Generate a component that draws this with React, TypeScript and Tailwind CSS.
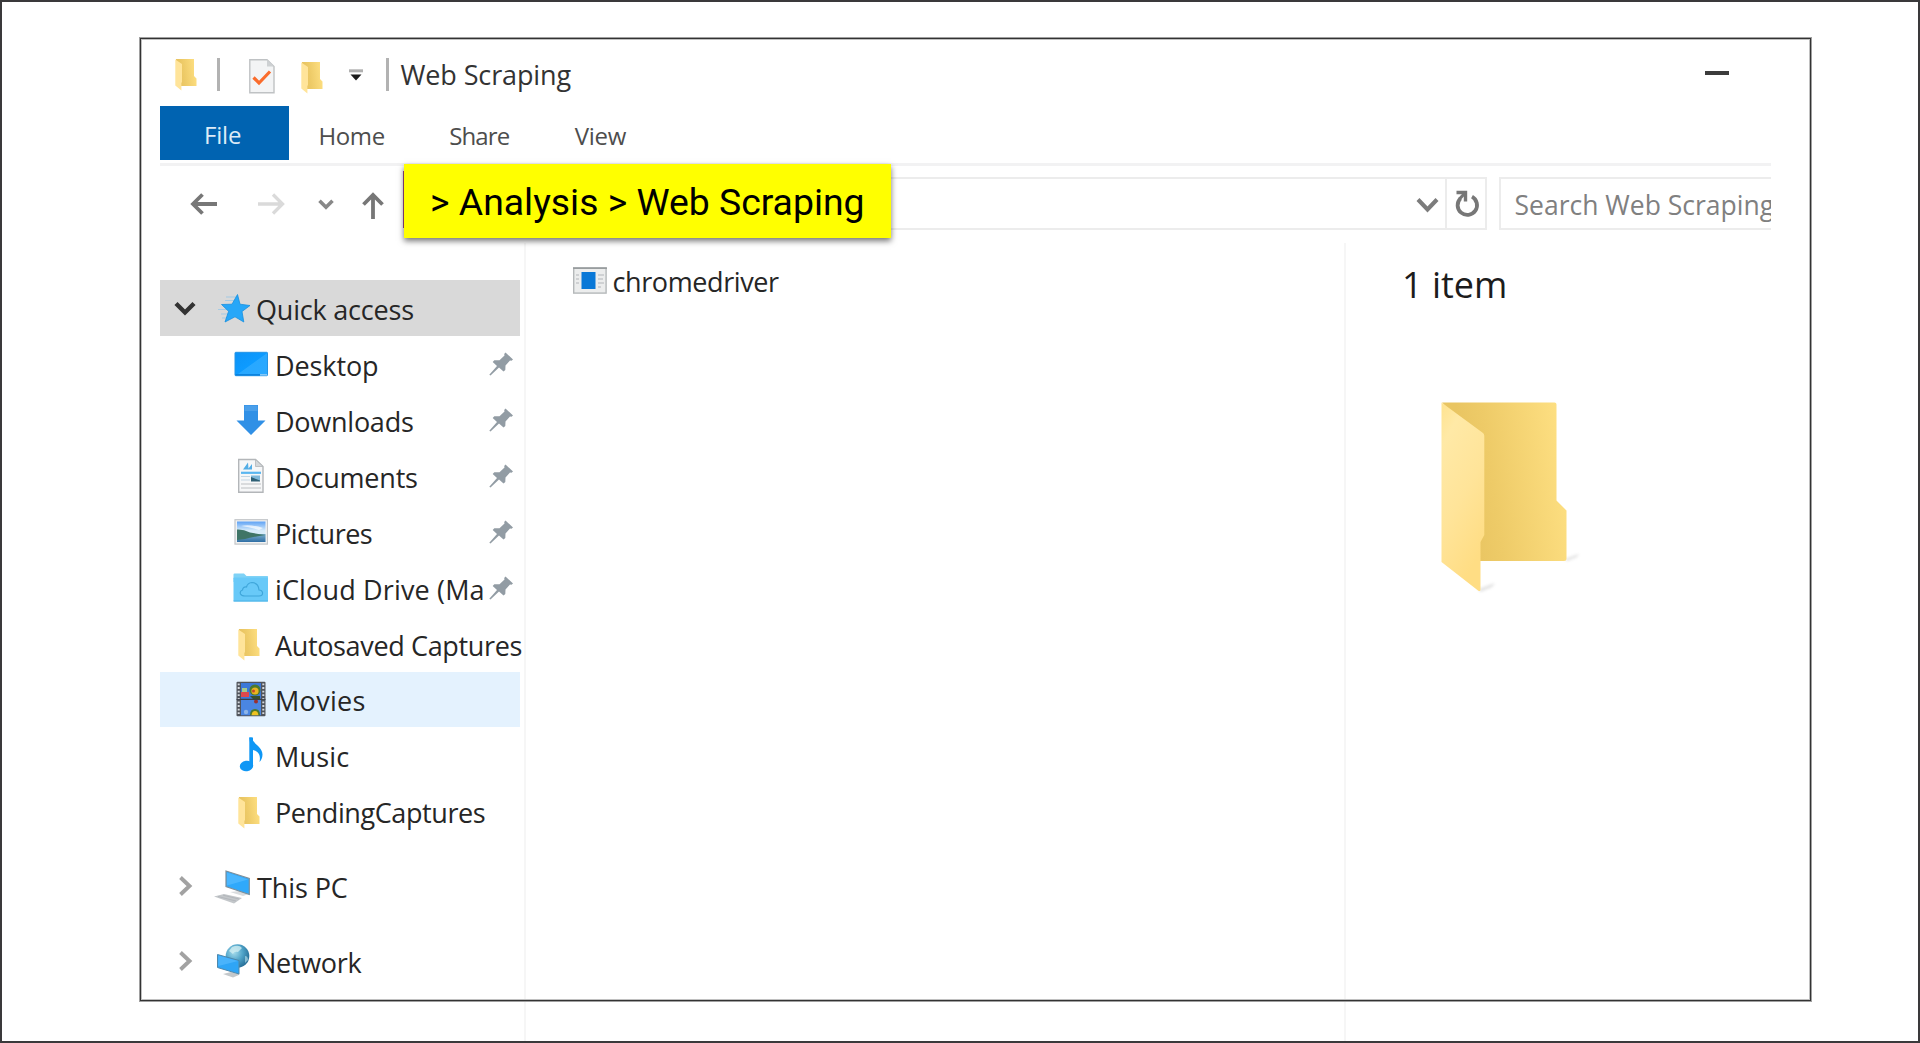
import type { ReactNode } from 'react';

function Svg({ w, h, className = '', children }: { w: number; h: number; className?: string; children: ReactNode }) {
  return (
    <svg width={w} height={h} viewBox={`0 0 ${w} ${h}`} fill="none" className={`block shrink-0 ${className}`}>
      {children}
    </svg>
  );
}

function Folder({ className = '' }: { className?: string }) {
  return (
    <Svg w={22} h={32} className={className}>
      <path d="M1 0H19V17L21.5 19.5V27H6L1 2Z" fill="url(#folderBack)" />
      <path d="M0.3 0.5L7 5V23L6.4 24V31.5L0.3 26.5Z" fill="#ffe49a" />
    </Svg>
  );
}

function BigFolder() {
  return (
    <Svg w={150} h={200}>
      <path d="M124 157L138 152L136 155L126 159Z" fill="#999" opacity="0.3" filter="url(#soft)" />
      <path d="M38 187L54 181L51 185L39 190Z" fill="#999" opacity="0.3" filter="url(#soft)" />
      <path d="M1 0.5H113.5Q115.5 0.5 115.5 2.5V98.5L125.5 108.5V156.5Q125.5 159 123 159H30V30Z" fill="url(#folderBack)" />
      <path d="M0.5 0.5L42 31Q43.3 32 43.3 34V133L39.5 140V187.5Q39.5 190 37 188.5L0.5 160Z" fill="url(#folderFront)" />
    </Svg>
  );
}

function Defs() {
  return (
    <svg width="0" height="0" className="absolute">
      <defs>
        <linearGradient id="folderBack" x1="0.15" y1="0.25" x2="1" y2="0.1">
          <stop offset="0" stopColor="#e9c562" />
          <stop offset="0.25" stopColor="#eecb68" />
          <stop offset="1" stopColor="#ffe184" />
        </linearGradient>
        <linearGradient id="folderFront" x1="0" y1="0" x2="0.4" y2="1">
          <stop offset="0" stopColor="#ffe38f" />
          <stop offset="0.2" stopColor="#ffe9a6" />
          <stop offset="0.6" stopColor="#ffe499" />
          <stop offset="1" stopColor="#ffdd84" />
        </linearGradient>
        <linearGradient id="blue" x1="0" y1="0" x2="1" y2="1">
          <stop offset="0" stopColor="#0c93f7" />
          <stop offset="0.5" stopColor="#0d9bff" />
          <stop offset="0.52" stopColor="#28a8ff" />
          <stop offset="1" stopColor="#2ba9ff" />
        </linearGradient>
        <linearGradient id="sky" x1="0" y1="0" x2="0" y2="1">
          <stop offset="0" stopColor="#5ea2f5" />
          <stop offset="0.45" stopColor="#d8ecfa" />
          <stop offset="1" stopColor="#d8ecfa" />
        </linearGradient>
        <linearGradient id="sea" x1="0" y1="0" x2="0" y2="1">
          <stop offset="0" stopColor="#7db0cc" />
          <stop offset="1" stopColor="#2f6ea5" />
        </linearGradient>
        <radialGradient id="globe" cx="0.35" cy="0.35" r="0.75">
          <stop offset="0" stopColor="#a6dcec" />
          <stop offset="0.5" stopColor="#4fa3c8" />
          <stop offset="1" stopColor="#1f658f" />
        </radialGradient>
        <filter id="soft" x="-30%" y="-60%" width="160%" height="220%">
          <feGaussianBlur stdDeviation="1.6" />
        </filter>
      </defs>
    </svg>
  );
}

function Star() {
  return (
    <Svg w={36} h={36}>
      <path d="M10 7H22M9 10.5H20M2 19.5H12M5 24H12M6 28H12" stroke="#8fc4ea" strokeWidth="1.2" opacity="0.7" />
      <path d="M21.5 4.5L24 14.2L34 15.5L26 21.5L27.8 32L19 26.8L9 32L12.6 21.3L5.5 14.5L16 14.2Z" fill="#27a7f8" stroke="#168fe0" strokeWidth="0.8" />
    </Svg>
  );
}

function DesktopIcon() {
  return (
    <Svg w={36} h={36}>
      <rect x="3" y="6.3" width="32.5" height="23.4" rx="0.8" fill="url(#blue)" stroke="#2494e6" strokeWidth="1" />
      <path d="M3.5 28.8H28" stroke="#0a7fdb" strokeWidth="1.4" />
      <path d="M28 28.8H35" stroke="#8fcbf5" strokeWidth="1.4" />
    </Svg>
  );
}

function DownloadIcon() {
  return (
    <Svg w={36} h={36}>
      <path d="M12 3H26V18.5H33.5L19 33L4.500 18.5H12Z" fill="#3090e6" />
      <path d="M12.500 3.500H25.500V9H12.500Z" fill="#4a9fea" />
    </Svg>
  );
}

function DocumentIcon() {
  return (
    <Svg w={36} h={36}>
      <path d="M6.700 1.500H23.500L31 8.500V34.300H6.700Z" fill="#f6f7f8" stroke="#b3b6b9" strokeWidth="1.400" />
      <path d="M23.500 1.500V8.500H31Z" fill="#d4d7d9" stroke="#b3b6b9" strokeWidth="0.800" />
      <path d="M11 11.500L16 4.500L16.500 10.500L20 6V11.500Z" fill="#53aee6" />
      <path d="M9 14.800H29" stroke="#5ab6f0" strokeWidth="2.200" />
      <path d="M9 18.500H18M9 22H18" stroke="#c3d5e2" strokeWidth="1.200" />
      <path d="M19 17.500H28V23H19Z" fill="#7fb8da" />
      <path d="M19 19L28 22.500V23.500H19Z" fill="#2d5f74" />
      <path d="M9 26H29M9 30H29" stroke="#cfd2d4" strokeWidth="1.300" />
    </Svg>
  );
}

function PictureIcon() {
  return (
    <Svg w={36} h={36}>
      <rect x="3" y="5.700" width="32.500" height="24.400" fill="#f2f2f2" stroke="#c3c6c9" strokeWidth="1.200" />
      <rect x="5" y="7.500" width="28.500" height="20.500" fill="url(#sky)" />
      <rect x="5" y="20" width="28.500" height="8" fill="url(#sea)" />
      <path d="M5 15.500Q11 15 18 18.500Q26 20 33.500 21Q20 23 13 25L5 26Z" fill="#3f7566" />
      <path d="M9 12Q18 10 31 14L27 16Q18 13 9 12Z" fill="#fff" opacity="0.700" />
    </Svg>
  );
}

function CloudFolderIcon() {
  return (
    <Svg w={36} h={36}>
      <path d="M1.500 4.500Q1.500 3.500 2.500 3.500H12L14.500 6H35.500Q36 6 36 7V12H1.500Z" fill="#7fd2f6" />
      <rect x="1.500" y="7.500" width="34.500" height="24" rx="0.800" fill="#68c9f8" />
      <path d="M1.500 31H36" stroke="#4db2e6" strokeWidth="1" />
      <path d="M13 26H27Q31 26 30.500 22.500Q30 20 27 20Q26.500 13 20 12.500Q15.500 12.800 14.500 17Q11 16.500 10.500 20Q7.500 21 8.500 24Q9.500 26 13 26Z" stroke="#3fa6da" strokeWidth="1.200" />
    </Svg>
  );
}

function MovieIcon() {
  return (
    <Svg w={36} h={36}>
      <rect x="4.500" y="0.700" width="29" height="34.600" rx="1" fill="#50545b" />
      <path d="M6.700 2.500V34M31.300 2.500V34" stroke="#d5d9de" strokeWidth="2" strokeDasharray="1.800 1.800" />
      <rect x="9" y="2" width="20" height="15.800" fill="#3c78d8" />
      <rect x="9" y="19" width="20" height="15.300" fill="#4a86e2" />
      <rect x="10" y="7" width="5" height="4" fill="#a4c98c" />
      <rect x="9" y="11" width="8" height="5" fill="#e0484c" />
      <circle cx="23" cy="9" r="5.500" fill="#4e7a2b" />
      <circle cx="23" cy="10" r="3.600" fill="#e9b420" />
      <circle cx="21.500" cy="10" r="1.500" fill="#c5472a" />
      <path d="M18 15H28V19H22Z" fill="#37502f" />
      <circle cx="24" cy="20.500" r="2" fill="#9a3030" />
      <circle cx="14" cy="31" r="2.200" fill="#8db5e8" />
      <path d="M18 34.300Q18 28 23 28Q28 28 28 34.300Z" fill="#4e7a2b" />
      <path d="M19.500 34.300Q20 30 23 30Q26 30 26.500 34.300Z" fill="#efc21f" />
      <path d="M4.500 18.400H33.500" stroke="#393e48" strokeWidth="1" />
    </Svg>
  );
}

function MusicIcon() {
  return (
    <Svg w={36} h={36}>
      <path d="M17.300 0.500H19.800C20.800 7 30.500 9.500 30.500 17.500C30.500 21 29 23.500 27.500 25C29 18 26.500 14.500 21 13V27Z" fill="#0f97f5" />
      <path d="M17.300 0.500H21V28.500H17.300Z" fill="#0f97f5" />
      <ellipse cx="14.500" cy="29" rx="6.700" ry="5.200" fill="#0f97f5" transform="rotate(-8 14.500 29)" />
    </Svg>
  );
}

function PcIcon() {
  return (
    <Svg w={36} h={36}>
      <path d="M0 28.500L10 26L28 30L20 35.500Z" fill="#c3c7ca" />
      <path d="M4 28.500L22 33M9 27.200L25 31" stroke="#aeb3b7" strokeWidth="0.800" />
      <path d="M16 24L26 23L35 26L29 28Z" fill="#d9dcde" />
      <path d="M12 3L35.300 10.500V26.500L12 18.500Z" fill="#2fa9fb" stroke="#7c8f9c" strokeWidth="1.200" />
      <path d="M13 4.500L34 11.500L13 17.500Z" fill="#56bcff" opacity="0.700" />
    </Svg>
  );
}

function NetworkIcon() {
  return (
    <Svg w={36} h={36}>
      <circle cx="23.500" cy="13" r="11.800" fill="url(#globe)" />
      <path d="M18 4Q25 1 28 5L24 9Q20 8 19 11L15 8Z" fill="#d5f0f3" opacity="0.750" />
      <path d="M31 13Q34 13 34 17L31 20Z" fill="#bfe6ef" opacity="0.600" />
      <path d="M9 31L17 29L26 31.500L19 34.500Z" fill="#c4c8cb" />
      <path d="M3.500 11.500L25 17.500V31L3.500 24.500Z" fill="#2fa5f6" stroke="#4f88ab" strokeWidth="1" />
      <path d="M4.300 12.500L24 18L4.300 23Z" fill="#5dbdff" opacity="0.600" />
    </Svg>
  );
}

function Pin() {
  return (
    <Svg w={26} h={26}>
      <path d="M17.500 1.500L25 8.500L23.500 9.800L22 9.500L17.500 14.500L17.300 19L15.500 20.500L11 16.500L2.500 24.500L1.300 23.800L9 15L4.700 11L6.300 9.300L11.500 9.200L16.500 4.500L16.200 3Z" fill="#929ca4" />
    </Svg>
  );
}

function AppIcon() {
  return (
    <Svg w={34} h={27}>
      <rect x="0.700" y="0.700" width="32.400" height="25.400" fill="#eceded" stroke="#b5b8ba" strokeWidth="1.400" />
      <path d="M0 1.200H34" stroke="#999d9f" strokeWidth="1.600" />
      <rect x="8.500" y="5" width="14" height="17" fill="#0978d7" />
      <path d="M3 8H6M3 12H6M3 16H6M25 8H31M25 12H30M25 16H31M25 20H28" stroke="#c5c8ca" strokeWidth="1.500" />
    </Svg>
  );
}

type Item = { label: string; icon: ReactNode; pinned?: boolean; text?: string; row?: string };

const items: Item[] = [
  { label: 'Desktop', icon: <DesktopIcon />, pinned: true, text: 'tracking-[-0.1px]' },
  { label: 'Downloads', icon: <DownloadIcon />, pinned: true, text: 'tracking-[-0.25px]' },
  { label: 'Documents', icon: <DocumentIcon />, pinned: true, text: 'tracking-[-0.2px]' },
  { label: 'Pictures', icon: <PictureIcon />, pinned: true, text: 'tracking-[-0.5px]' },
  { label: 'iCloud Drive (Ma', icon: <CloudFolderIcon />, pinned: true, text: 'tracking-[0.15px]' },
  { label: 'Autosaved Captures', icon: <Folder className="ml-[6px] mt-[3px] mr-[8px]" />, text: 'tracking-[-0.35px]' },
  { label: 'Movies', icon: <MovieIcon />, text: 'tracking-[0.3px]', row: 'bg-[#e4f2fe]' },
  { label: 'Music', icon: <MusicIcon />, text: 'tracking-[0.2px]' },
  { label: 'PendingCaptures', icon: <Folder className="ml-[6px] mt-[3px] mr-[8px]" />, text: 'tracking-[-0.4px]' },
];

function SideChevron() {
  return (
    <Svg w={14} h={22} className="ml-[19px] mr-[21px]">
      <path d="M1.500 2.500L10.500 11L1.500 19.500" stroke="#a2a2a2" strokeWidth="3.900" />
    </Svg>
  );
}

export default function App() {
  return (
    <div className="relative h-[1043px] w-[1920px] overflow-hidden border-2 border-[#3a393b] bg-white font-['Open_Sans',sans-serif] text-[27px] leading-none text-[#262626]">
      <Defs />
      <div className="ml-[158px] flex h-full w-[1610.500px] flex-col overflow-hidden pt-[38px]">
        <header className="flex h-[66px] shrink-0 items-center">
          <Folder className="ml-[15px] mt-[3px]" />
          <div className="ml-[20px] mt-[3px] h-[33px] w-[3px] bg-[#b2b2b2]" />
          <Svg w={26} h={35} className="ml-[29px] mt-[6px]">
            <path d="M0.800 0.800H18L25 7.500V33.800H0.800Z" fill="#f3f4f5" stroke="#bfc2c4" strokeWidth="1.400" />
            <path d="M18 0.800V7.500H25Z" fill="#ced1d3" />
            <path d="M4.500 18.500L10 24L21 12.500" stroke="#fa6c2c" strokeWidth="3.200" />
          </Svg>
          <Folder className="ml-[26px] mt-[9px]" />
          <Svg w={14} h={12} className="ml-[26px] mt-[4px]">
            <path d="M0 1.800H14" stroke="#b0b0b0" strokeWidth="3" />
            <path d="M1.500 5.500H12.500L7 11.500Z" fill="#1b1b1b" />
          </Svg>
          <div className="ml-[23px] mt-[3px] h-[33px] w-[3px] bg-[#b2b2b2]" />
          <h1 className="ml-[11.500px] mt-[2px] text-[27px] tracking-[-0.120px] text-[#333]">Web Scraping</h1>
          <div className="ml-auto mr-[42px] h-[3.500px] w-[23.500px] bg-[#3c3c3c]" />
        </header>

        <nav className="flex h-[54px] shrink-0 text-[24px] text-[#4d4d4d]">
          <div className="flex w-[128.500px] items-center bg-[#0063b1] pl-[44px] pt-[4px] tracking-[-0.200px] text-[#dcebf7]">File</div>
          <div className="flex items-center pl-[30px] pt-[5px] tracking-[-0.400px]">Home</div>
          <div className="flex items-center pl-[64.500px] pt-[5px] tracking-[-0.900px]">Share</div>
          <div className="flex items-center pl-[65.500px] pt-[5px] tracking-[-0.300px]">View</div>
        </nav>
        <div className="mt-[3px] h-[3px] shrink-0 bg-[#f2f2f3]" />

        <div className="flex h-[77px] shrink-0 pt-[11px]">
          <div className="flex h-[53px] w-[244px] shrink-0 items-center">
            <Svg w={28} h={22} className="ml-[29.500px] mt-px">
              <path d="M27 11H3M12.500 1.500L3 11L12.500 20.500" stroke="#777" strokeWidth="3.800" />
            </Svg>
            <Svg w={28} h={22} className="ml-[40px] mt-px">
              <path d="M0 11H24M15 1.500L24.500 11L15 20.500" stroke="#dadada" strokeWidth="3.300" />
            </Svg>
            <Svg w={16} h={11} className="ml-[32px] mt-px">
              <path d="M1.500 1.800L8 8.300L14.500 1.800" stroke="#888" strokeWidth="3.600" />
            </Svg>
            <Svg w={22} h={28} className="ml-[28.500px] mt-[5px]">
              <path d="M11 27V3M1.500 12.500L11 3L20.500 12.500" stroke="#777" strokeWidth="3.800" />
            </Svg>
          </div>
          <div className="flex h-[53px] w-[1083px] shrink-0 border-2 border-[#ececec]">
            <div className="flex flex-1 items-center justify-end border-r-2 border-[#ececec] pr-[6px]">
              <Svg w={23} h={16} className="mt-[2px]">
                <path d="M2 2.500L11.500 12.500L21 2.500" stroke="#7c7c7c" strokeWidth="4.100" />
              </Svg>
            </div>
            <div className="flex w-[38px] items-center justify-center">
              <Svg w={26} h={30} className="ml-[2px]">
                <path d="M18 7.700A9.700 9.700 0 1 1 6.500 9.300" stroke="#777" strokeWidth="3.800" />
                <path d="M2.500 3.500H11.500V12.500" stroke="#777" strokeWidth="3.400" />
                <path d="M11 4L5.500 10" stroke="#777" strokeWidth="3.200" />
              </Svg>
            </div>
          </div>
          <div className="ml-[12px] flex h-[53px] flex-1 items-center overflow-hidden whitespace-nowrap border-2 border-r-0 border-[#ececec] pl-[13.500px] pt-[4px] text-[26.500px] text-[#808080]">
            <span>Search Web Scraping</span>
          </div>
        </div>

        <div className="flex min-h-0 flex-1">
          <aside className="w-[366px] shrink-0 border-r-2 border-[#f6f6f6] pt-[37.300px]">
            <div className="flex h-[55.900px] w-[360px] items-center bg-[#d9d9d9]">
              <Svg w={22} h={16} className="ml-[14px] mt-px">
                <path d="M2 2.500L11 11.500L20 2.500" stroke="#333" strokeWidth="4.400" />
              </Svg>
              <div className="ml-[20px]"><Star /></div>
              <span className="ml-[4px] pt-[3px] tracking-[-0.200px]">Quick access</span>
            </div>
            {items.map((item) => (
              <div key={item.label} className={`flex h-[55.900px] w-[360px] items-center whitespace-nowrap pl-[72px] ${item.row ?? ''}`}>
                {item.icon}
                <span className={`ml-[7px] pt-[3px] ${item.text ?? ''}`}>{item.label}</span>
                {item.pinned && <div className="ml-auto mr-[6.500px]"><Pin /></div>}
              </div>
            ))}
            <div className="mt-[18.600px] flex h-[55.900px] items-center">
              <SideChevron />
              <PcIcon />
              <span className="ml-[7px] pt-[3px] tracking-[-0.100px]">This PC</span>
            </div>
            <div className="mt-[19px] flex h-[55.900px] items-center">
              <SideChevron />
              <NetworkIcon />
              <span className="ml-[6px] pt-[3px] tracking-[-0.300px]">Network</span>
            </div>
          </aside>

          <main className="flex w-[820px] shrink-0 items-start border-r-2 border-[#f6f6f6] pl-[47px] pt-[24px]">
            <AppIcon />
            <span className="ml-[5.500px] mt-px tracking-[-0.400px]">chromedriver</span>
          </main>

          <section className="flex-1 pl-[56px] pt-[24px]">
            <p className="text-[36px] text-[#1c1c1c]">1 item</p>
            <div className="ml-[38.500px] mt-[99px]"><BigFolder /></div>
          </section>
        </div>
      </div>

      <div className="pointer-events-none absolute left-[137px] top-[35px] h-[965px] w-[1673px] border border-[#a0a0a0]">
        <div className="h-full w-full border border-[#333]">
          <div className="h-full w-full border border-[#c0c0c0]" />
        </div>
      </div>
      <div className="absolute left-[401px] top-[169px] h-[57px] w-[3px] bg-[#a0498f]" />
      <div className="absolute left-[402px] top-[162px] flex h-[74px] w-[487px] items-center whitespace-nowrap bg-[#ffff00] pl-[26px] pt-[3px] font-[Roboto,sans-serif] text-[37.330px] text-black shadow-[0_3px_6px_rgba(0,0,0,0.550)]">
        &gt; Analysis &gt; Web Scraping
      </div>
    </div>
  );
}
